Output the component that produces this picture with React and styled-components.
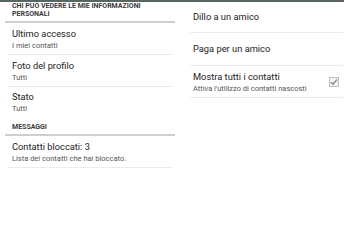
import React from "react";
import styled, { createGlobalStyle } from "styled-components";

const Global = createGlobalStyle`
  html, body {
    margin: 0;
    padding: 0;
    background: #fff;
    width: 350px;
    height: 250px;
    overflow: hidden;
  }
  * { box-sizing: border-box; }
`;

const Page = styled.div`
  width: 350px;
  height: 250px;
  font-family: Roboto, "Liberation Sans", sans-serif;
  background: #fff;
  display: flex;
  flex-direction: column;
`;

const TopBar = styled.div`
  height: 2px;
  width: 344px;
  background: #58665f;
`;

const Columns = styled.div`
  display: grid;
  grid-template-columns: 175px 175px;
`;

const Column = styled.div`
  display: flex;
  flex-direction: column;
`;

const Header = styled.div`
  font-size: 7px;
  font-weight: 700;
  color: #3a3a3a;
  line-height: 8px;
  padding: ${(p) => (p.$top ? `${p.$top}px` : "0")} 0 3px 7px;
  border-bottom: 2px solid #cfcfcf;
  margin-left: 5px;
`;

const Item = styled.div`
  display: flex;
  align-items: center;
  justify-content: space-between;
  height: ${(p) => p.$h}px;
  border-bottom: ${(p) => (p.$last ? "none" : "1px solid #ececec")};
  margin: 0 3px 0 8px;
  padding-left: 4px;
`;

const RightItem = styled(Item)`
  margin: 0 7px 0 15px;
  padding-left: 3px;
`;

const Texts = styled.div`
  display: flex;
  flex-direction: column;
  gap: 1px;
`;

const Title = styled.div`
  font-size: 9.3px;
  color: #222;
  line-height: 12px;
`;

const Sub = styled.div`
  font-size: 7.5px;
  color: #555;
  line-height: 9px;
`;

const Box = styled.div`
  width: 10px;
  height: 10px;
  margin-right: 4px;
  border: 1px solid #bdbdbd;
  background: #f4f4f4;
  display: flex;
  align-items: center;
  justify-content: center;
`;

const Check = () => (
  <Box>
    <svg width="9" height="8" viewBox="0 0 9 8">
      <path d="M1 4.2 L3.4 6.5 L8 1.2" fill="none" stroke="#8a8a8a" strokeWidth="1.6" />
    </svg>
  </Box>
);

export default function App() {
  return (
    <Page>
      <Global />
      <TopBar />
      <Columns>
        <Column>
          <Header>
            CHI PUÒ VEDERE LE MIE INFORMAZIONI
            <br />
            PERSONALI
          </Header>
          <Item $h={32}>
            <Texts>
              <Title>Ultimo accesso</Title>
              <Sub>I miei contatti</Sub>
            </Texts>
          </Item>
          <Item $h={32}>
            <Texts>
              <Title>Foto del profilo</Title>
              <Sub>Tutti</Sub>
            </Texts>
          </Item>
          <Item $h={30} $last>
            <Texts>
              <Title>Stato</Title>
              <Sub>Tutti</Sub>
            </Texts>
          </Item>
          <Header $top={6}>MESSAGGI</Header>
          <Item $h={32}>
            <Texts>
              <Title>Contatti bloccati: 3</Title>
              <Sub>Lista dei contatti che hai bloccato.</Sub>
            </Texts>
          </Item>
        </Column>
        <Column>
          <RightItem $h={31}>
            <Title>Dillo a un amico</Title>
          </RightItem>
          <RightItem $h={33}>
            <Title>Paga per un amico</Title>
          </RightItem>
          <RightItem $h={32}>
            <Texts>
              <Title>Mostra tutti i contatti</Title>
              <Sub>Attiva l'utilizzo di contatti nascosti</Sub>
            </Texts>
            <Check />
          </RightItem>
        </Column>
      </Columns>
    </Page>
  );
}
